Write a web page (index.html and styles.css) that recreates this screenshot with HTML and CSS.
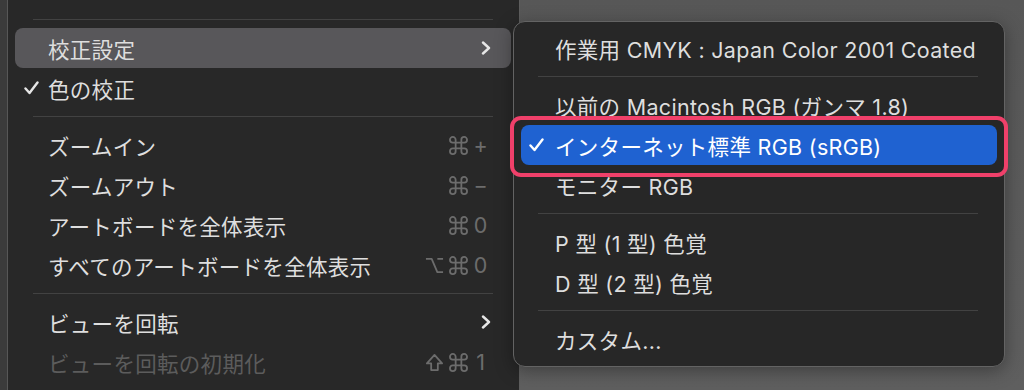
FILE: index.html
```html
<!DOCTYPE html>
<html lang="ja">
<head>
  <meta charset="UTF-8">
  <meta name="viewport" content="width=device-width, initial-scale=1.0">
  <title>表示メニュー – 校正設定</title>
  <link rel="stylesheet" href="styles.css">
</head>
<body>

  <div class="screen">
    <div class="edge"></div>

    <!-- メインメニュー -->
    <div class="menu main-menu">
      <div class="sep"><span></span></div>

      <div class="item active">
        <span class="mark"></span>
        <span class="label">校正設定</span>
        <svg class="chevron" width="10" height="14" viewBox="0 0 10 14"><polyline points="2,1.5 8,7 2,12.5"/></svg>
      </div>
      <div class="item">
        <span class="mark"><svg class="check" width="15" height="14" viewBox="0 0 15 14"><polyline points="1.5,7.5 5.5,12 13.5,1.5"/></svg></span>
        <span class="label">色の校正</span>
      </div>

      <div class="sep"><span></span></div>

      <div class="item">
        <span class="mark"></span>
        <span class="label">ズームイン</span>
        <span class="keys">
          <svg class="mod" width="19" height="19" viewBox="2 2 20 20"><path d="M15 6v12a3 3 0 1 0 3-3H6a3 3 0 1 0 3 3V6a3 3 0 1 0-3 3h12a3 3 0 1 0-3-3"/></svg>
          <span class="key">+</span>
        </span>
      </div>
      <div class="item">
        <span class="mark"></span>
        <span class="label">ズームアウト</span>
        <span class="keys">
          <svg class="mod" width="19" height="19" viewBox="2 2 20 20"><path d="M15 6v12a3 3 0 1 0 3-3H6a3 3 0 1 0 3 3V6a3 3 0 1 0-3 3h12a3 3 0 1 0-3-3"/></svg>
          <span class="key">−</span>
        </span>
      </div>
      <div class="item">
        <span class="mark"></span>
        <span class="label">アートボードを全体表示</span>
        <span class="keys">
          <svg class="mod" width="19" height="19" viewBox="2 2 20 20"><path d="M15 6v12a3 3 0 1 0 3-3H6a3 3 0 1 0 3 3V6a3 3 0 1 0-3 3h12a3 3 0 1 0-3-3"/></svg>
          <span class="key">0</span>
        </span>
      </div>
      <div class="item">
        <span class="mark"></span>
        <span class="label">すべてのアートボードを全体表示</span>
        <span class="keys">
          <svg class="mod" width="19" height="19" viewBox="2 2 20 20"><path d="M3 5h6l6 14h6M15 5h6"/></svg>
          <svg class="mod" width="19" height="19" viewBox="2 2 20 20"><path d="M15 6v12a3 3 0 1 0 3-3H6a3 3 0 1 0 3 3V6a3 3 0 1 0-3 3h12a3 3 0 1 0-3-3"/></svg>
          <span class="key">0</span>
        </span>
      </div>

      <div class="sep"><span></span></div>

      <div class="item">
        <span class="mark"></span>
        <span class="label">ビューを回転</span>
        <svg class="chevron" width="10" height="14" viewBox="0 0 10 14"><polyline points="2,1.5 8,7 2,12.5"/></svg>
      </div>
      <div class="item disabled">
        <span class="mark"></span>
        <span class="label">ビューを回転の初期化</span>
        <span class="keys">
          <svg class="mod" width="19" height="19" viewBox="2 2 20 20"><path d="M8.5 20v-7H4l8-9 8 9h-4.5v7z"/></svg>
          <svg class="mod" width="19" height="19" viewBox="2 2 20 20"><path d="M15 6v12a3 3 0 1 0 3-3H6a3 3 0 1 0 3 3V6a3 3 0 1 0-3 3h12a3 3 0 1 0-3-3"/></svg>
          <span class="key">1</span>
        </span>
      </div>
    </div>

    <!-- サブメニュー -->
    <div class="menu sub-menu">
      <div class="item">
        <span class="mark"></span>
        <span class="label">作業用 CMYK : Japan Color 2001 Coated</span>
      </div>

      <div class="sep"><span></span></div>

      <div class="item">
        <span class="mark"></span>
        <span class="label">以前の Macintosh RGB (ガンマ 1.8)</span>
      </div>
      <div class="item selected">
        <span class="mark"><svg class="check" width="15" height="14" viewBox="0 0 15 14"><polyline points="1.5,7.5 5.5,12 13.5,1.5"/></svg></span>
        <span class="label">インターネット標準 RGB (sRGB)</span>
        <span class="callout"></span>
      </div>
      <div class="item">
        <span class="mark"></span>
        <span class="label">モニター RGB</span>
      </div>

      <div class="sep"><span></span></div>

      <div class="item">
        <span class="mark"></span>
        <span class="label">P 型 (1 型) 色覚</span>
      </div>
      <div class="item">
        <span class="mark"></span>
        <span class="label">D 型 (2 型) 色覚</span>
      </div>

      <div class="sep"><span></span></div>

      <div class="item">
        <span class="mark"></span>
        <span class="label">カスタム...</span>
      </div>
    </div>
  </div>

</body>
</html>
```

FILE: styles.css
```css
body {
  margin: 0;
  width: 1024px;
  height: 390px;
  overflow: hidden;
  background: linear-gradient(#575757, #5f5f5f);
  font-family: Inter, 'Noto Sans CJK JP', sans-serif;
  font-size: 21.5px;
  letter-spacing: 0.3px;
  color: #dedede;
}

.screen {
  display: flex;
  align-items: flex-start;
  height: 390px;
}

.edge {
  width: 7px;
  height: 100%;
  background-color: #3b3b3b;
  flex: none;
}

.menu {
  background-color: #282828;
  box-sizing: border-box;
  flex: none;
}

.main-menu {
  width: 513px;
  height: 100%;
  padding-top: 11px;
  border-left: 1px solid #575757;
  border-right: 1px solid #5e5e5e;
}

.sub-menu {
  width: 492px;
  margin-top: 21px;
  margin-left: -7px;
  padding: 6px 0 7px;
  border: 1px solid #636363;
  border-radius: 12px;
  background-color: #272727;
  box-shadow: 0 4px 18px rgba(0,0,0,0.35);
  position: relative;
  z-index: 2;
}

.sep {
  height: 17px;
  display: flex;
  align-items: center;
  padding: 0 26px 0 25px;
}

.sep span {
  flex: 1;
  height: 1px;
  background-color: #424242;
}

.sub-menu .sep {
  padding: 0 26px 0 24px;
}

.item {
  display: flex;
  align-items: center;
  height: 40px;
  margin: 0 8px 0 7px;
  padding-right: 20px;
  border-radius: 8px;
  white-space: nowrap;
  position: relative;
}

.sub-menu .item {
  margin: 0 7px;
}

.mark {
  width: 33px;
  flex: none;
  display: flex;
  align-items: center;
  padding-left: 9px;
  box-sizing: border-box;
}

.sub-menu .mark {
  width: 34px;
  padding-left: 8px;
}

.check polyline,
.chevron polyline {
  fill: none;
  stroke: #e6e6e6;
  stroke-width: 2.4;
  stroke-linecap: round;
  stroke-linejoin: round;
}

.label {
  flex: 1;
}

.chevron {
  flex: none;
}

.keys {
  display: flex;
  align-items: center;
  gap: 5px;
  color: #6c6c6c;
  margin-right: 3px;
}

.mod {
  flex: none;
}

.mod path {
  fill: none;
  stroke: #6c6c6c;
  stroke-width: 1.9;
  stroke-linejoin: round;
}

.keys .key {
  width: 15px;
  text-align: center;
  letter-spacing: 0;
}

.active {
  background-color: #58575a;
}

.disabled .label {
  color: #5c5c5c;
}

.selected {
  background-color: #1f62d1;
  color: #ffffff;
}

.selected .check polyline {
  stroke: #ffffff;
}

.callout {
  position: absolute;
  top: -9px;
  right: -11px;
  bottom: -12px;
  left: -11px;
  border: 4px solid #f0406a;
  border-radius: 11px;
}
```
